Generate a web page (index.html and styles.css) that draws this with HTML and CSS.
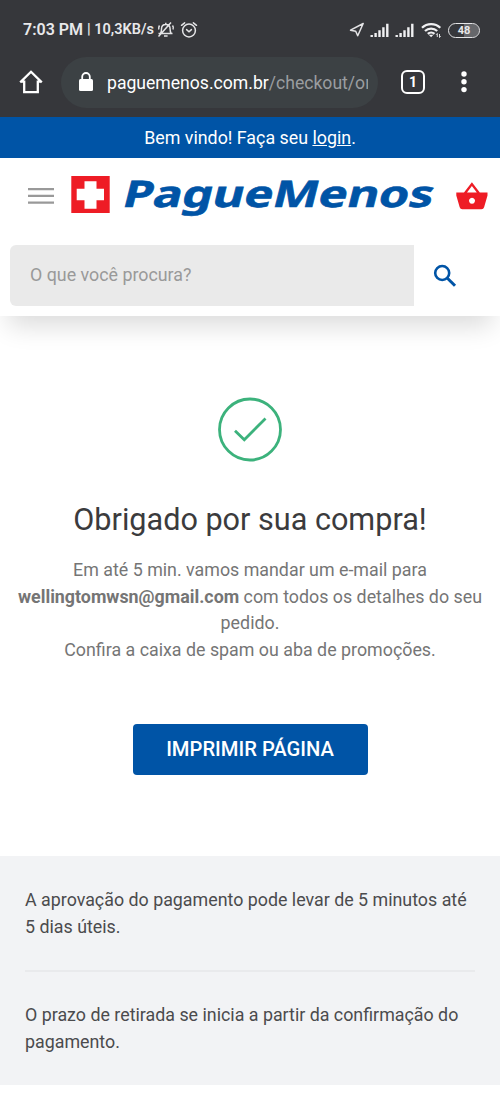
FILE: index.html
```html
<!DOCTYPE html>
<html lang="pt-BR">
<head>
<meta charset="utf-8">
<title>Pague Menos</title>
<link rel="stylesheet" href="styles.css">
</head>
<body>
<div class="status">
  <span class="clock">7:03 PM</span><span class="speed">| 10,3KB/s</span>
  <svg class="bell" width="18" height="18" viewBox="0 0 18 18" fill="none" stroke="#e4e4e6" stroke-width="1.500"><path d="M1.500 12.500h14M3.500 12.500c1-1.500 1-2.500 1-4.500 0-3 1.800-4.500 4.300-4.500s4.300 1.500 4.300 4.500c0 2 0 3 1 4.500M8.800 3.500V1.800M7 15h3.600M1.500 15.500 14 1.500M15.500 4.500q1.500 2 .500 4M1.800 8.500q-.500-2 .700-4"/></svg>
  <svg class="alarm" width="18" height="18" viewBox="0 0 18 18" fill="none" stroke="#e4e4e6" stroke-width="1.500" stroke-linecap="round"><circle cx="9" cy="9.500" r="6.400"/><path d="M1.500 4.300 4.600 1.800M16.500 4.300l-3.100-2.500M6.600 8.600 9 10.700l2.400-2.100"/></svg>
  <svg class="nav" width="16" height="16" viewBox="0 0 16 16" fill="none" stroke="#e4e4e6" stroke-width="1.500" stroke-linejoin="round"><path d="M14.200 1.500 1.500 8.200l5.200 1 2 4.600z"/></svg>
  <svg class="signal" width="20" height="15" viewBox="0 0 20 15" fill="#f0f0f2"><path d="M.5 12h2.400v2H.5zM4.400 10h2.400v4H4.400zM8.300 7.200h2.400V14H8.300zM12.200 4.200h2.400V14h-2.400zM16.100.8h2.400V14h-2.400z"/></svg>
  <svg class="signal second" width="20" height="15" viewBox="0 0 20 15" fill="#f0f0f2"><path d="M.5 12h2.400v2H.5zM4.400 10h2.400v4H4.400zM8.300 7.200h2.400V14H8.300zM12.200 4.200h2.400V14h-2.400zM16.100.8h2.400V14h-2.400z"/></svg>
  <svg class="wifi" width="21" height="17" viewBox="0 0 21 17" fill="none" stroke="#f0f0f2" stroke-width="2.200"><path d="M1 5.800c5-5 13.300-5 18.300 0M4 9c3.400-3.300 8.800-3.300 12.200 0M6.800 11.900c1.900-1.800 4.800-1.800 6.700 0"/><path d="m7.800 12.800 2.300 2.500 2.300-2.500z" fill="#f0f0f2" stroke="none"/><path d="M16.300 15v-3.500m-1.200 1.300 1.200-1.300M18.500 12v3.500m1.200-1.300-1.200 1.300" stroke-width=".9"/></svg>
  <span class="battery">48</span>
</div>
<div class="toolbar">
  <svg class="home" width="24" height="24" viewBox="0 0 24 24" fill="none" stroke="#fff" stroke-width="2.300"><path d="M1.200 12.400 12 1.800l10.800 10.600M2 11.600h3.200v10.600h13.600V11.600H22"/></svg>
  <div class="address">
    <svg width="16" height="20" viewBox="0 0 16 20"><rect x="1" y="7" width="14" height="12" rx="1.500" fill="#fff"/><path d="M4.200 8V4.800a3.800 3.800 0 0 1 7.600 0V8" fill="none" stroke="#fff" stroke-width="1.800"/></svg>
    <span class="url">paguemenos.com.br<span class="path">/checkout/or</span></span>
  </div>
  <span class="tabs">1</span>
  <svg class="dots" width="6" height="22" viewBox="0 0 6 22" fill="#fff"><circle cx="3" cy="3" r="2.700"/><circle cx="3" cy="10.800" r="2.700"/><circle cx="3" cy="18.600" r="2.700"/></svg>
</div>
<div class="welcome"><span>Bem vindo! Faça seu <a class="login">login</a>.</span></div>
<header class="header">
  <div class="brand">
    <svg class="menu" width="26" height="16" viewBox="0 0 26 16" fill="#999"><path d="M0 0h26v2.300H0zM0 6.700h26V9H0zM0 13.400h26v2.300H0z"/></svg>
    <svg class="logo" width="370" height="54" viewBox="0 0 370 54"><path fill="#ee1c25" d="M.300 7.900h38.400v37.200H.300z"/><path fill="#fff" d="M13.500 13.200h12v7.600H33v11.500h-7.500v8.500h-12v-8.500H5.700V20.800h7.800z"/><text class="wordmark" transform="translate(50 39.300) skewX(-14)" textLength="310" lengthAdjust="spacingAndGlyphs">PagueMenos</text></svg>
    <svg class="basket" width="32" height="28" viewBox="0 0 32 28"><path fill="#ee1c25" fill-rule="evenodd" d="M.300 10.500H8L15.900.300l7.900 10.200h7.700v3l-3.400 11.800q-.600 2-2.600 2H6.300q-2 0-2.600-2L.300 13.500zM11 10.500h9.800L15.900 3.900zM16 15.700a3 3 0 1 0 .010 0z"/></svg>
  </div>
  <div class="search">
    <div class="field">O que você procura?</div>
    <svg width="24" height="24" viewBox="0 0 24 24" fill="none" stroke="#0054a6"><circle cx="9.200" cy="9" r="7" stroke-width="2.600"/><path d="m14.200 14 7.800 7.800" stroke-width="3"/></svg>
  </div>
</header>
<main class="thanks">
  <svg width="66" height="66" viewBox="0 0 66 66" fill="none" stroke="#3cb27c" stroke-width="2.800"><circle cx="33" cy="33.500" r="30.500"/><path d="m18 34.700 9.300 9L48.500 22.500"/></svg>
  <h1>Obrigado por sua compra!</h1>
  <p>Em até 5 min. vamos mandar um e-mail para<br><b>wellingtomwsn@gmail.com</b> com todos os detalhes do seu<br>pedido.<br>Confira a caixa de spam ou aba de promoções.</p>
  <div class="print">IMPRIMIR PÁGINA</div>
</main>
<section class="notes">
  <p>A aprovação do pagamento pode levar de 5 minutos até<br>5 dias úteis.</p>
  <p class="second-note">O prazo de retirada se inicia a partir da confirmação do<br>pagamento.</p>
</section>
</body>
</html>
```
FILE: styles.css
```css
* { box-sizing: border-box; }
body { margin: 0; height: 1111px; overflow: hidden; background: #fff; font-family: Roboto, sans-serif; font-size: 17.84px; line-height: 26.6px; white-space: nowrap; }
svg { display: block; flex: none; }
.status { height: 50px; padding: 10px 20px 0 23px; background: #36373b; color: #e8e8ea; display: flex; align-items: center; font-size: 16px; font-weight: 600; }
.speed { margin-left: 4px; font-size: 14.5px; }
.bell { margin-left: 3px; }
.alarm { margin-left: 5px; }
.nav { margin-left: auto; }
.signal { margin-left: 5px; }
.wifi { margin-left: 6px; }
.battery { margin-left: 6px; width: 32px; height: 15px; border: 1.5px solid #e4e4e6; border-radius: 8px; font-size: 11px; line-height: 13px; font-weight: 700; text-align: center; background: linear-gradient(90deg, #36373b 50%, #66676b 50%); background-clip: padding-box; }
.toolbar { height: 67px; padding: 0 33px 3px 19px; background: #36373b; display: flex; align-items: center; }
.address { width: 317px; height: 51px; margin-left: 18px; padding: 0 10px 0 17px; border-radius: 26px; background: #3c4144; display: flex; align-items: center; }
.url { margin-left: 13px; padding-top: 2px; width: 261px; overflow: hidden; color: #fff; font-size: 17.6px; }
.path { color: #9a9da0; }
.tabs { width: 24px; height: 24px; margin-left: 23px; border: 2.5px solid #fff; border-radius: 6px; color: #fff; font-size: 14px; font-weight: 700; line-height: 21px; text-align: center; }
.dots { margin-left: auto; }
.welcome { height: 41px; padding-top: 1px; background: #0054a6; color: #fff; display: flex; align-items: center; justify-content: center; }
.login { text-decoration: underline; }
.header { height: 158px; background: #fff; box-shadow: 0 18px 24px -8px rgba(0,0,0,.14); }
.brand { height: 76px; padding: 0 12px 0 28px; display: flex; align-items: center; }
.logo { margin-left: 17px; margin-bottom: 3px; }
.wordmark { font-family: "Noto Sans", sans-serif; font-size: 36.8px; font-weight: 700; fill: #0054a6; stroke: #0054a6; stroke-width: .6px; }
.basket { margin-left: auto; }
.search { padding: 11px 0 0 10px; display: flex; align-items: center; gap: 19px; }
.field { width: 404px; height: 61px; padding-left: 20px; border-radius: 6px 0 0 6px; background: #eaeaea; color: #999; line-height: 60px; }
.thanks { height: 540px; padding-top: 80px; display: flex; flex-direction: column; align-items: center; text-align: center; color: #757575; }
.thanks h1 { margin: 38px 0 17px; color: #3b3b3d; font-size: 30.6px; font-weight: 400; line-height: 40px; }
.thanks p { margin: 0; }
.print { width: 235px; height: 51px; margin-top: 61px; border-radius: 4px; background: #0054a6; color: #fff; font-size: 20.2px; font-weight: 500; line-height: 50px; }
.notes { height: 229px; padding: 31px 25px 0; background: #f2f3f5; color: #4b4b4d; }
.notes p { margin: 0; }
.notes .second-note { margin-top: 30px; padding-top: 30px; border-top: 2px solid #e9eaec; }
```
